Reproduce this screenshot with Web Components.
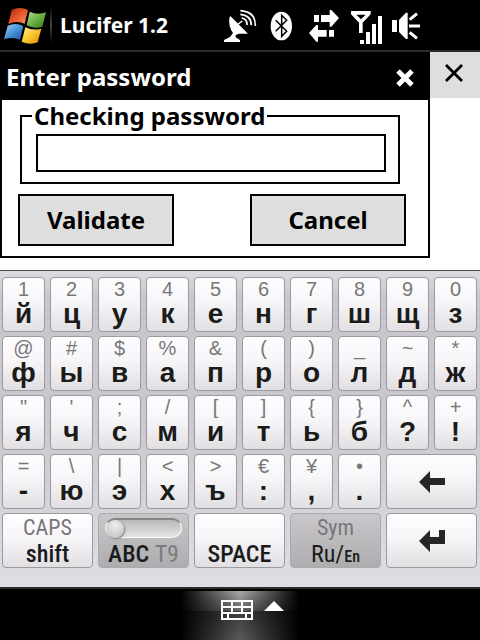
<!DOCTYPE html>
<html lang="en">
<head>
<meta charset="utf-8">
<meta name="viewport" content="width=device-width, initial-scale=1">
<title>Lucifer 1.2</title>
<style>
    body {
        margin: 0;
        background: #fff;
        color: #000;
        font-family: "Noto Sans", Tahoma, sans-serif;
        font-size: 24px;
        font-weight: 700;
    }
</style>
</head>
<body>
<phone-screen>
    <status-bar slot="top">Lucifer 1.2</status-bar>
    <password-dialog heading="Enter password" legend="Checking password"></password-dialog>
    <soft-keyboard slot="bottom"></soft-keyboard>
    <input-bar slot="bottom"></input-bar>
</phone-screen>

<script>
class PhoneScreen extends HTMLElement {
    constructor() {
        super();
        this.attachShadow({ mode: 'open' });
    }

    connectedCallback() {
        this.shadowRoot.innerHTML = `
            <style>
                :host {
                    display: flex;
                    flex-direction: column;
                    min-height: 100vh;
                }

                main {
                    flex: 1;
                    display: grid;
                    grid-template-columns: 1fr 50px;
                    align-items: start;
                }

                .close {
                    height: 46px;
                    padding: 0 2px 4px 0;
                    border: 0;
                    background: #dedede;
                    display: grid;
                    place-items: center;
                }
            </style>
            <slot name="top"></slot>
            <main>
                <slot></slot>
                <button class="close" aria-label="Close">
                    <svg width="18" height="18" viewBox="0 0 18 18"><path d="M1 1 17 17M17 1 1 17" stroke="#000" stroke-width="2.8"/></svg>
                </button>
            </main>
            <slot name="bottom"></slot>
        `;
    }
}

class StatusBar extends HTMLElement {
    constructor() {
        super();
        this.attachShadow({ mode: 'open' });
    }

    connectedCallback() {
        this.shadowRoot.innerHTML = `
            <style>
                :host {
                    display: flex;
                    align-items: center;
                    height: 50px;
                    padding-right: 51px;
                    border-bottom: 2px solid #2a2a2a;
                    background: #000;
                    color: #fff;
                    font-size: 21px;
                }

                .start {
                    width: 50px;
                    height: 50px;
                    padding: 0;
                    border: 0;
                    background: none;
                }

                .rule {
                    width: 2px;
                    height: 38px;
                    margin-right: 8px;
                    background: linear-gradient(#000, #444, #000);
                }

                .icons {
                    display: flex;
                    margin-left: auto;
                }

                .icons svg {
                    width: 42px;
                    height: 50px;
                    fill: #fff;
                }
            </style>
            <button class="start" aria-label="Start">
                <svg width="50" height="50" viewBox="0 0 150 150">
                    <defs>
                        <linearGradient id="r" x2="1" y2="1"><stop stop-color="#a32a10"/><stop offset=".5" stop-color="#e8562a"/><stop offset="1" stop-color="#f29a6c"/></linearGradient>
                        <linearGradient id="g" x2="1" y2="1"><stop stop-color="#b8dc90"/><stop offset=".5" stop-color="#6fb043"/><stop offset="1" stop-color="#2e7a14"/></linearGradient>
                        <linearGradient id="b" x2="1" y2="1"><stop stop-color="#9cd2f2"/><stop offset=".5" stop-color="#4a94d8"/><stop offset="1" stop-color="#1c4ea4"/></linearGradient>
                        <linearGradient id="y" x2="1" y2="1"><stop stop-color="#fff09a"/><stop offset=".5" stop-color="#fbc62c"/><stop offset="1" stop-color="#d88a08"/></linearGradient>
                    </defs>
                    <path fill="url(#r)" d="M35 30Q58 18 84 30L74 71Q50 60 25 72Z"/>
                    <path fill="url(#g)" d="M89 35Q112 46 138 37L127 80Q103 88 80 76Z"/>
                    <path fill="url(#b)" d="M23 77Q47 66 70 78L60 119Q37 109 12 118Z"/>
                    <path fill="url(#y)" d="M76 82Q99 93 124 86L113 127Q89 136 65 125Z"/>
                </svg>
            </button>
            <span class="rule"></span>
            <slot></slot>
            <div class="icons">
                <svg viewBox="12 0 126 150" role="img" aria-label="GPS">
                    <path d="M46 48 99 101H72L62 105V112L75 120V126H27V120L45 111 54 99Q40 82 43 54Z"/>
                    <path d="M68 73 82 63" stroke="#fff" stroke-width="4"/>
                    <path d="M80 54Q97 57 96 75M76 43Q109 46 109 76M76 32Q122 35 121 78" fill="none" stroke="#fff" stroke-width="5"/>
                </svg>
                <svg viewBox="138 0 126 150" role="img" aria-label="Bluetooth">
                    <ellipse cx="199" cy="78" rx="32" ry="43"/>
                    <path d="M182 61 215 94 200 109V46L215 61 182 94" fill="none" stroke="#000" stroke-width="4.5"/>
                </svg>
                <svg viewBox="264 0 126 150" role="img" aria-label="Data connection">
                    <path d="M297 45H312V66H297ZM318 45H344V30H349L372 54 349 80H344V66H318Z"/>
                    <path d="M357 90H342V110H357ZM335 90H309V75H304L282 99 304 125H309V110H335Z"/>
                </svg>
                <svg viewBox="390 0 126 150" role="img" aria-label="Signal">
                    <path fill-rule="evenodd" d="M408 33H467V43L443 68V99H432V68L408 43ZM424 44 438 58 452 44Z"/>
                    <path d="M435 120H447V132H435ZM453 96H465V132H453ZM471 72H483V132H471ZM489 48H501V132H489Z"/>
                </svg>
                <svg viewBox="516 0 126 150" role="img" aria-label="Volume">
                    <path d="M531 60H546V96H531ZM552 60 573 38H578V117H573L552 96Z"/>
                    <path d="M584 59 606 41M582 78H615M584 97 606 115" stroke="#fff" stroke-width="9"/>
                </svg>
            </div>
        `;
    }
}

class PasswordDialog extends HTMLElement {
    constructor() {
        super();
        this.attachShadow({ mode: 'open' });
    }

    connectedCallback() {
        this.shadowRoot.innerHTML = `
            <style>
                :host {
                    display: block;
                    border: 2px solid #000;
                    border-top: 0;
                }

                header {
                    display: flex;
                    align-items: center;
                    justify-content: space-between;
                    height: 48px;
                    padding: 0 14px 0 4px;
                    background: #000;
                    color: #fff;
                }

                h1 {
                    margin: 0;
                    font-size: inherit;
                }

                .x {
                    display: flex;
                    padding: 0;
                    border: 0;
                    margin-top: 4px;
                    background: none;
                }

                form {
                    padding: 0 22px 10px 16px;
                }

                fieldset {
                    margin: 0 6px 10px 2px;
                    padding: 2px 12px 10px 14px;
                    border: 2px solid #000;
                }

                legend {
                    margin-left: -4px;
                    padding: 0 2px;
                    line-height: 32px;
                }

                input {
                    display: block;
                    box-sizing: border-box;
                    width: 100%;
                    height: 38px;
                    padding: 0 6px;
                    border: 2px solid #000;
                    border-radius: 0;
                    background: #fff;
                    font: inherit;
                }

                .actions {
                    display: flex;
                    justify-content: space-between;
                }

                .actions button {
                    width: 156px;
                    height: 52px;
                    padding: 0 0 2px;
                    border: 2px solid #000;
                    border-radius: 0;
                    background: #dedede;
                    color: #000;
                    font: inherit;
                }
            </style>
            <header>
                <h1>${this.getAttribute('heading')}</h1>
                <button class="x" aria-label="Close dialog">
                    <svg width="18" height="18" viewBox="0 0 18 18"><path d="M2 2 16 16M16 2 2 16" stroke="#fff" stroke-width="5"/></svg>
                </button>
            </header>
            <form>
                <fieldset>
                    <legend>${this.getAttribute('legend')}</legend>
                    <input type="password" aria-label="Password">
                </fieldset>
                <div class="actions">
                    <button type="button">Validate</button>
                    <button type="button">Cancel</button>
                </div>
            </form>
        `;
    }
}

class SoftKey extends HTMLElement {
    constructor() {
        super();
        this.attachShadow({ mode: 'open' });
    }

    connectedCallback() {
        this.shadowRoot.innerHTML = `
            <style>
                :host {
                    display: grid;
                    height: 55px;
                }

                :host([wide]) {
                    grid-column: span 2;
                }

                button {
                    display: flex;
                    flex-direction: column;
                    align-items: center;
                    min-width: 0;
                    padding: 0;
                    border: 1px solid #9c9a9e;
                    border-radius: 4px;
                    background: linear-gradient(#fefdfe, #f8f5f9 45%, #e2dfe3);
                    color: #1a1c1c;
                    font: 700 28px/28px "Liberation Sans", Arial, sans-serif;
                    white-space: nowrap;
                }

                :host([dark]) button {
                    border-color: #aaa9ab;
                    background: linear-gradient(#c9c7ca, #aeacaf);
                }

                :host([label]) button {
                    font: 500 24px/24px "Roboto Condensed", Roboto, sans-serif;
                }

                ::slotted([slot=alt]) {
                    height: 22px;
                    color: #77777a;
                    font-size: 20px;
                    font-weight: 400;
                    line-height: 22px;
                }

                :host([label]) ::slotted([slot=alt]) {
                    height: 28px;
                    font-size: 22px;
                    line-height: 28px;
                }

                :host([icon]) button {
                    justify-content: center;
                }
            </style>
            <button><slot name="alt"></slot><span><slot></slot></span></button>
        `;
    }
}

class SoftKeyboard extends HTMLElement {
    constructor() {
        super();
        this.attachShadow({ mode: 'open' });
    }

    connectedCallback() {
        const rows = [
            ['1234567890', 'йцукенгшщз'],
            ['@#$%&()_~*', 'фывапролдж'],
            ['"\';/[]{}^+', 'ячсмитьб?!'],
            ['=\\|<>€¥•', '-юэхъ:,.'],
        ];
        const esc = (c) => c.replace('&', '&amp;').replace('<', '&lt;');
        const keys = rows.map(([alts, mains]) => [...alts].map((alt, i) =>
            `<soft-key><span slot="alt">${esc(alt)}</span>${mains[i]}</soft-key>`
        ).join('')).join('');

        this.shadowRoot.innerHTML = `
            <style>
                :host {
                    display: grid;
                    grid-template-columns: repeat(10, 1fr);
                    gap: 4px 5px;
                    padding: 6px 3px 19px 2px;
                    border-top: 1px solid #48464a;
                    border-bottom: 2px solid #2b2d2b;
                    background: linear-gradient(#dddbe0, #c8c6cc 8%, #cbc9cf 50%, #dedee4);
                }

                svg {
                    display: block;
                }

                .toggle {
                    display: flex;
                    box-sizing: border-box;
                    width: 77px;
                    margin-top: 4px;
                    height: 20px;
                    border: 1px solid #fff;
                    border-top: 2px solid #858585;
                    border-radius: 10px;
                    background: linear-gradient(#b9b9b9, #e4e4e4);
                }

                .knob {
                    width: 18px;
                    height: 18px;
                    border-radius: 50%;
                    background: radial-gradient(circle at 50% 30%, #eee, #bbb);
                    box-shadow: 1px 1px 2px #777;
                }

                .off {
                    color: #7c7c7e;
                    font-weight: 400;
                }

                .lang {
                    font-weight: 400;
                }

                small {
                    font-size: 16px;
                    font-weight: 500;
                    line-height: 16px;
                }
            </style>
            ${keys}
            <soft-key wide icon aria-label="Backspace">
                <svg width="26" height="22" viewBox="0 0 26 22"><path d="M0 11 11 0V7H26V14H11V22Z" fill="#262626"/></svg>
            </soft-key>
            <soft-key wide label><span slot="alt">CAPS</span>shift</soft-key>
            <soft-key wide label dark>
                <span slot="alt"><span class="toggle"><span class="knob"></span></span></span>
                ABC <span class="off">T9</span>
            </soft-key>
            <soft-key wide label><span slot="alt"></span>SPACE</soft-key>
            <soft-key wide label dark><span slot="alt">Sym</span><span class="lang">Ru/<small>En</small></span></soft-key>
            <soft-key wide icon aria-label="Enter">
                <svg width="26" height="22" viewBox="0 0 26 22"><path d="M0 11 11 0V7H20V0H26V14H11V22Z" fill="#262626"/></svg>
            </soft-key>
        `;
    }
}

class InputBar extends HTMLElement {
    constructor() {
        super();
        this.attachShadow({ mode: 'open' });
    }

    connectedCallback() {
        this.shadowRoot.innerHTML = `
            <style>
                :host {
                    display: flex;
                    justify-content: center;
                    height: 49px;
                    padding-top: 2px;
                    background: #000;
                }

                div {
                    display: flex;
                    justify-content: center;
                    gap: 11px;
                    width: 118px;
                    padding: 9px 0 0 24px;
                    box-sizing: border-box;
                    background:
                        linear-gradient(90deg, #000, transparent 50%, #000),
                        linear-gradient(#aaa, #666 20px, #3c3c3c 20px, #5a5a5a);
                }

                button {
                    display: flex;
                    height: 20px;
                    padding: 0;
                    border: 0;
                    background: none;
                }
            </style>
            <div>
                <button aria-label="Keyboard">
                    <svg width="32" height="20" viewBox="0 0 32 20" fill="none" stroke="#fff" stroke-width="2" shape-rendering="crispEdges">
                        <path d="M1 1H31V19H1ZM1 7H31M1 13H31M11 1V13M21 1V13M7 13V19M25 13V19"/>
                    </svg>
                </button>
                <button aria-label="Input methods">
                    <svg width="20" height="12" viewBox="0 0 20 12"><path d="M0 11 10 1 20 11Z" fill="#fff"/></svg>
                </button>
            </div>
        `;
    }
}

customElements.define('phone-screen', PhoneScreen);
customElements.define('status-bar', StatusBar);
customElements.define('password-dialog', PasswordDialog);
customElements.define('soft-key', SoftKey);
customElements.define('soft-keyboard', SoftKeyboard);
customElements.define('input-bar', InputBar);
</script>
</body>
</html>
